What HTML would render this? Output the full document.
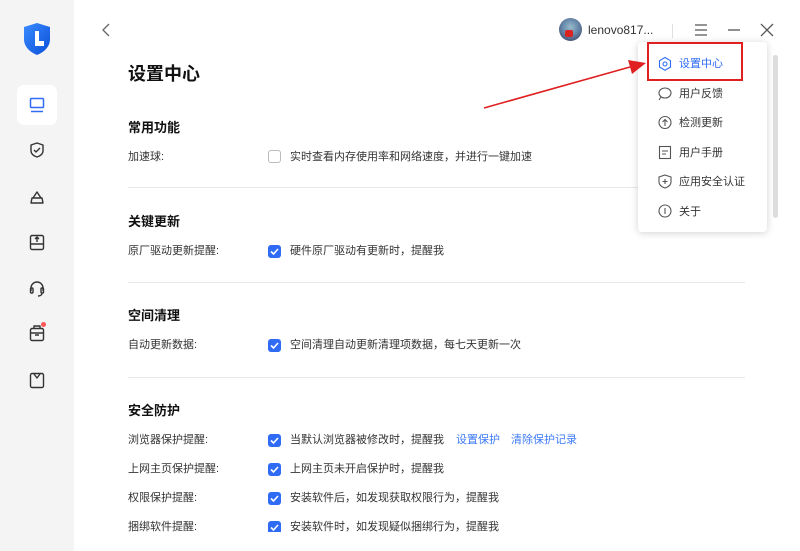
<!DOCTYPE html>
<html><head><meta charset="utf-8"><style>
*{margin:0;padding:0;box-sizing:border-box}
body{width:800px;height:551px;overflow:hidden;background:#fff;font-family:"Liberation Sans","Noto Sans CJK SC",sans-serif;position:relative;color:#333}
.side{position:absolute;left:0;top:0;width:74px;height:551px;background:#f4f4f4}
.a{position:absolute}
.t{position:absolute;font-size:11px;color:#333;white-space:nowrap;line-height:14px}
.h{position:absolute;font-size:13px;font-weight:bold;color:#111;line-height:16px}
.cb{position:absolute;left:268px;width:13px;height:13px;border-radius:3px;background:#2f6bf5}
.cb svg{position:absolute;left:0;top:0}
.cbe{position:absolute;left:268px;width:13px;height:13px;border-radius:3px;border:1px solid #bbb;background:#fff}
.div{position:absolute;left:128px;width:617px;height:1px;background:#e8e8e8}
.mi{position:absolute;left:679px;font-size:11px;color:#333;line-height:14px}
</style></head><body>
<div class="side"></div>
<svg class="a" style="left:22px;top:22px" width="30" height="34" viewBox="0 0 30 34"><defs><linearGradient id="g" x1="0" y1="0" x2="1" y2="1"><stop offset="0" stop-color="#3a8bff"/><stop offset="1" stop-color="#0b4fd8"/></linearGradient></defs><path d="M15 1 L28 5 V17 C28 25 22 30 15 33 C8 30 2 25 2 17 V5 Z" fill="url(#g)"/><path d="M13 9 V24 H22 V19 H17 V9 Z" fill="#fff"/></svg>
<div class="a" style="left:17px;top:85px;width:40px;height:40px;background:#fff;border-radius:7px"></div>
<svg class="a" style="left:29px;top:97px" width="16" height="16" viewBox="0 0 16 16" fill="none" stroke="#2f6bf5" stroke-width="1.5"><rect x="1.5" y="1.5" width="13" height="9" rx="1"/><path d="M2 14.5h12"/></svg>
<svg class="a" style="left:0;top:0" width="74" height="400" fill="none" stroke="#333" stroke-width="1.4" stroke-linejoin="round">
<path d="M37 143 l6 2 v6 c0 3-3 5-6 6 c-3-1-6-3-6-6 v-6 z"/><path d="M34 150 l2 2 l4-4"/>
<path d="M31 203 h12 l-1-5 h-10 z M33 198 l4-6 l4 6"/>
<rect x="30.5" y="235.5" width="13" height="14" rx="1.5"/><path d="M31 244 h12 M37 242 v-5 M35 239 l2-2 2 2"/>
<path d="M31 291 v-3 a6 6 0 0 1 12 0 v3"/><rect x="30.5" y="288" width="2.5" height="5" rx="1"/><rect x="41" y="288" width="2.5" height="5" rx="1"/><path d="M42 293 c0 2-2 3-4 3"/>
<rect x="30.5" y="328.5" width="13" height="12" rx="1.5"/><path d="M34 328 v-2 h6 v2 M31 333 h12 M35 335 h4"/>
<rect x="30.5" y="373.5" width="13" height="14" rx="1.5"/><path d="M34 374 l3 4 l3-4"/>
</svg>
<div class="a" style="left:41px;top:322px;width:5px;height:5px;border-radius:50%;background:#f55"></div>
<svg class="a" style="left:100px;top:23px" width="12" height="14" viewBox="0 0 12 14" fill="none" stroke="#666" stroke-width="1.3"><path d="M9 1 L3 7 L9 13"/></svg>
<div class="a" style="left:559px;top:18px;width:23px;height:23px;border-radius:50%;background:radial-gradient(circle at 50% 40%,#9bc 0,#68a 45%,#335 100%)"></div>
<div class="a" style="left:565px;top:30px;width:8px;height:7px;background:#d22;border-radius:2px"></div>
<div class="t" style="left:588px;top:23px;color:#333;font-size:12px">lenovo817...</div>
<div class="a" style="left:672px;top:24px;width:1px;height:14px;background:#e0e0e0"></div>
<svg class="a" style="left:694px;top:23px" width="14" height="14" fill="none" stroke="#555" stroke-width="1.3"><path d="M1 2h12M1 7h12M1 12h12"/></svg>
<svg class="a" style="left:727px;top:23px" width="14" height="14" fill="none" stroke="#555" stroke-width="1.3"><path d="M1 7h12"/></svg>
<svg class="a" style="left:760px;top:23px" width="14" height="14" fill="none" stroke="#555" stroke-width="1.3"><path d="M1 1l12 12M13 1L1 13"/></svg>
<div class="a" style="left:128px;top:60px;font-size:18px;font-weight:bold;color:#111">设置中心</div>
<div class="h" style="left:128px;top:120px">常用功能</div>
<div class="t" style="left:128px;top:150px">加速球:</div><div class="cbe" style="top:150px"></div><div class="t" style="left:290px;top:150px">实时查看内存使用率和网络速度，并进行一键加速</div>
<div class="div" style="top:187px"></div>
<div class="h" style="left:128px;top:214px">关键更新</div>
<div class="t" style="left:128px;top:244px">原厂驱动更新提醒:</div><div class="cb" style="top:245px"><svg width="13" height="13" fill="none" stroke="#fff" stroke-width="1.6"><path d="M3 6.5l2.5 2.5 4.5-5"/></svg></div><div class="t" style="left:290px;top:244px">硬件原厂驱动有更新时，提醒我</div>
<div class="div" style="top:282px"></div>
<div class="h" style="left:128px;top:308px">空间清理</div>
<div class="t" style="left:128px;top:338px">自动更新数据:</div><div class="cb" style="top:339px"><svg width="13" height="13" fill="none" stroke="#fff" stroke-width="1.6"><path d="M3 6.5l2.5 2.5 4.5-5"/></svg></div><div class="t" style="left:290px;top:338px">空间清理自动更新清理项数据，每七天更新一次</div>
<div class="div" style="top:377px"></div>
<div class="h" style="left:128px;top:403px">安全防护</div>
<div class="t" style="left:128px;top:433px">浏览器保护提醒:</div><div class="cb" style="top:434px"><svg width="13" height="13" fill="none" stroke="#fff" stroke-width="1.6"><path d="M3 6.5l2.5 2.5 4.5-5"/></svg></div><div class="t" style="left:290px;top:433px">当默认浏览器被修改时，提醒我</div>
<div class="t" style="left:456px;top:433px;color:#3d7af5">设置保护</div><div class="t" style="left:511px;top:433px;color:#3d7af5">清除保护记录</div>
<div class="t" style="left:128px;top:462px">上网主页保护提醒:</div><div class="cb" style="top:463px"><svg width="13" height="13" fill="none" stroke="#fff" stroke-width="1.6"><path d="M3 6.5l2.5 2.5 4.5-5"/></svg></div><div class="t" style="left:290px;top:462px">上网主页未开启保护时，提醒我</div>
<div class="t" style="left:128px;top:491px">权限保护提醒:</div><div class="cb" style="top:492px"><svg width="13" height="13" fill="none" stroke="#fff" stroke-width="1.6"><path d="M3 6.5l2.5 2.5 4.5-5"/></svg></div><div class="t" style="left:290px;top:491px">安装软件后，如发现获取权限行为，提醒我</div>
<div class="a" style="left:74px;top:520px;width:700px;height:12px;overflow:hidden">
<div class="t" style="left:54px;top:0">捆绑软件提醒:</div><div class="cb" style="left:194px;top:1px"><svg width="13" height="13" fill="none" stroke="#fff" stroke-width="1.6"><path d="M3 6.5l2.5 2.5 4.5-5"/></svg></div><div class="t" style="left:216px;top:0">安装软件时，如发现疑似捆绑行为，提醒我</div></div>
<div class="a" style="left:773px;top:55px;width:5px;height:163px;background:#ddd;border-radius:3px"></div>
<div class="a" style="left:638px;top:42px;width:129px;height:190px;background:#fff;border-radius:4px;box-shadow:0 1px 8px rgba(0,0,0,.18)"></div>
<svg class="a" style="left:652px;top:56px" width="140" height="170" fill="none" stroke="#555" stroke-width="1.1">
<path d="M13 1.5 l5.5 3.2 v6.3 l-5.5 3.2 l-5.5-3.2 v-6.3z" stroke="#2f6bf5"/><circle cx="13" cy="8" r="2" stroke="#2f6bf5"/>
<ellipse cx="13" cy="37" rx="6" ry="5"/><path d="M9 41 l-2 3"/>
<circle cx="13" cy="66.5" r="6"/><path d="M13 70 v-6 M10.5 66 l2.5-2.5 2.5 2.5"/>
<rect x="7.5" y="90.5" width="11" height="12"/><path d="M10 95h6M10 98h4"/>
<path d="M13 119 l6 2 v5 c0 3-3 5-6 6 c-3-1-6-3-6-6 v-5z M13 123v5 M10.5 125.5h5"/>
<circle cx="13" cy="155" r="6"/><path d="M13 152v6"/>
</svg>
<div class="mi" style="left:679px;top:57px;color:#2f6bf5">设置中心</div>
<div class="mi" style="top:87px">用户反馈</div>
<div class="mi" style="top:116px">检测更新</div>
<div class="mi" style="top:146px">用户手册</div>
<div class="mi" style="top:175px">应用安全认证</div>
<div class="mi" style="top:205px">关于</div>
<div class="a" style="left:647px;top:42px;width:96px;height:39px;border:2px solid #e02020"></div>
<svg class="a" style="left:480px;top:55px" width="170" height="60"><path d="M4 53 L150 12" stroke="#e02020" stroke-width="1.6"/><path d="M166 8 L148 5 L152 19 Z" fill="#e02020"/></svg>
</body></html>
